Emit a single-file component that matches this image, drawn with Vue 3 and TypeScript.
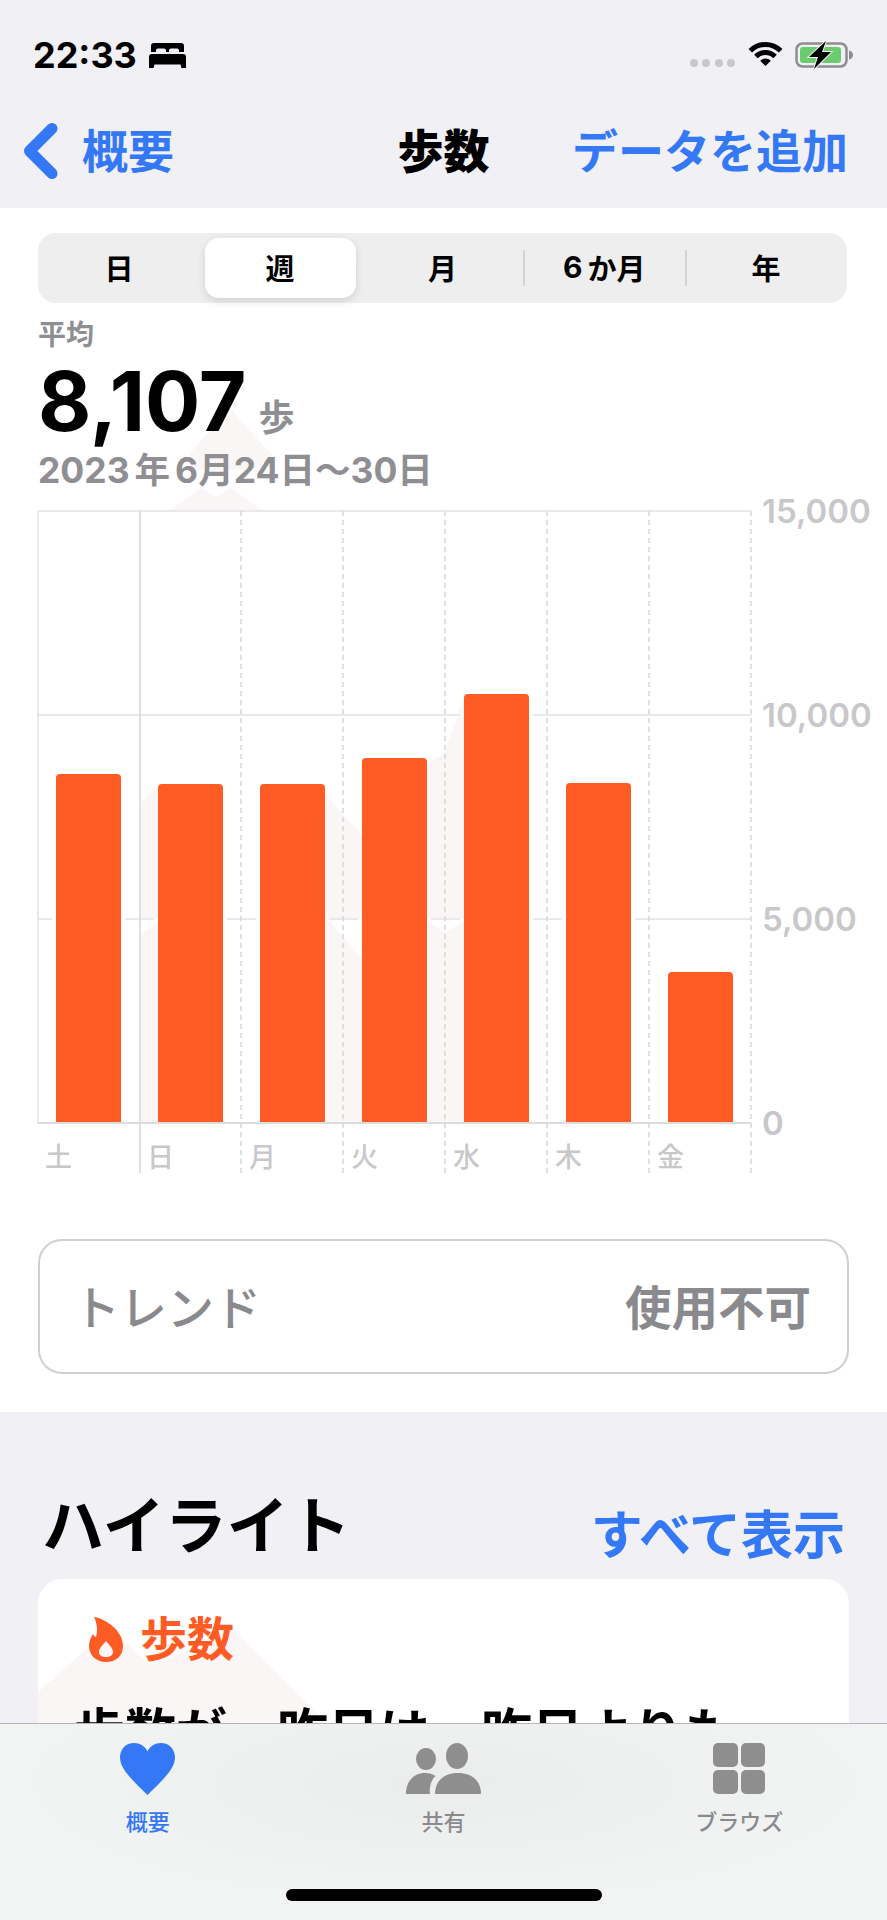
<template>
  <div class="page">
    <header class="top">
      <div class="status">
        <div class="status-left">
          <span class="time">22:33</span>
          <svg class="bed" viewBox="0 0 37 25">
            <path d="M5 0h27a3 3 0 0 1 3 3v6h-5V7.500a2 2 0 0 0-2-2H22a2 2 0 0 0-2 2V9h-3V7.500a2 2 0 0 0-2-2H9a2 2 0 0 0-2 2V9H2V3a3 3 0 0 1 3-3z" />
            <path d="M3 11h31a3 3 0 0 1 3 3v11h-4.500l-1-3.500h-26l-1 3.500H0V14a3 3 0 0 1 3-3z" />
          </svg>
        </div>
        <div class="status-right">
          <div class="dots"><i></i><i></i><i></i><i></i></div>
          <svg class="wifi" viewBox="0 0 35 25">
            <path d="M2.300 8.800A21.500 21.500 0 0 1 32.700 8.800" fill="none" stroke="#000" stroke-width="5" />
            <path d="M7.950 14.450A13.500 13.500 0 0 1 27.050 14.450" fill="none" stroke="#000" stroke-width="5" />
            <path d="M12.200 18.700A7.500 7.500 0 0 1 22.800 18.700L17.500 24z" />
          </svg>
          <svg class="battery" viewBox="0 0 60 28">
            <rect x="1.500" y="2.500" width="50" height="23" rx="6" fill="none" stroke="#8e8e8e" stroke-width="2.500" />
            <rect x="5" y="6" width="41" height="16" rx="3" fill="#6ccb6e" />
            <path d="M54 9.500c2.500.5 4 2.200 4 4.500s-1.500 4-4 4.500z" fill="#8e8e8e" />
            <path d="M31 0L14 16H23L19 28L36 11H27z" stroke="#f0f0f5" stroke-width="2" paint-order="stroke" />
          </svg>
        </div>
      </div>
      <nav class="nav">
        <div class="nav-back">
          <svg class="chevron" viewBox="0 0 35 58">
            <path d="M29 6.500L6.500 29L29 51.500" fill="none" stroke="#3478f6" stroke-width="11" stroke-linecap="round" stroke-linejoin="round" />
          </svg>
          <span>概要</span>
        </div>
        <div class="nav-title">歩数</div>
        <div class="nav-add">データを追加</div>
      </nav>
    </header>

    <main class="main">
      <svg class="watermark" viewBox="0 208 887 320">
        <path d="M230 408L275 458L250 470H190V453z" />
        <path d="M170 510L202 487L216 498L230 487L262 510z" />
      </svg>

      <div class="segments">
        <div
          v-for="(seg, i) in segments"
          :key="seg.label"
          class="segment"
          :class="{ active: i === 1, divided: i === 3 || i === 4 }"
        >
          <span v-if="seg.digit" class="segment-digit">{{ seg.digit }}</span>{{ seg.label }}
        </div>
      </div>

      <div class="stats">
        <div class="stat-label">平均</div>
        <div class="stat-value">8,107<span class="stat-unit">歩</span></div>
        <div class="stat-date">2023<span class="thin">年</span>6月24日〜30日</div>
      </div>

      <svg class="chart" viewBox="0 480 887 700">
        <path v-for="(d, i) in paleShapes" :key="i" :d="d" fill="#faf6f5" />
        <template v-for="line in gridLines" :key="line.y">
          <line
            v-for="seg in line.segments"
            :key="seg[0]"
            :x1="seg[0]"
            :x2="seg[1]"
            :y1="line.y"
            :y2="line.y"
            stroke="#e9e9ea"
            stroke-width="2"
          />
        </template>
        <line x1="38" x2="38" y1="511" y2="1123" stroke="#e2e2e3" stroke-width="1.500" />
        <line x1="140" x2="140" y1="511" y2="1173" stroke="#d6d6d8" stroke-width="1.500" />
        <line
          v-for="x in dashedX"
          :key="x"
          :x1="x"
          :x2="x"
          y1="511"
          y2="1173"
          stroke="#d6d6d8"
          stroke-width="1.500"
          stroke-dasharray="5 4"
        />
        <path v-for="bar in bars" :key="bar.x" :d="bar.d" fill="#fe5c24" />
        <line x1="38" x2="751" y1="1123" y2="1123" stroke="#dcdcdd" stroke-width="2" />
        <text v-for="t in axis" :key="t.label" class="axis" x="762" :y="t.y">{{ t.label }}</text>
        <text v-for="(d, i) in days" :key="d" class="day" :x="45 + i * 102" y="1167">{{ d }}</text>
      </svg>

      <div class="trend">
        <span>トレンド</span>
        <span class="trend-value">使用不可</span>
      </div>
    </main>

    <section class="highlights">
      <div class="highlights-head">
        <h2>ハイライト</h2>
        <span class="show-all">すべて表示</span>
      </div>
      <div class="card">
        <svg class="card-mark" viewBox="38 1579 811 300">
          <path d="M38 1692L110 1628L150 1665L205 1645L213 1673L205 1645L226 1622L330 1726H38z" />
        </svg>
        <div class="card-title">
          <svg class="flame" viewBox="0 0 34 45">
            <path
              fill-rule="evenodd"
              d="M5 0C14 1 34 12 34 29C34 39 27 45 17 45C7 45 0 38 0 29C0 24 2 20 4 17C5 19 6 20 7 20C9 14 8 6 5 0ZM17 24C14 28 10 31 10 35C10 38 13 40 17 40C21 40 24 38 24 35C24 31 20 28 17 24Z"
            />
          </svg>
          <span>歩数</span>
        </div>
        <p class="card-text">歩数が、昨日は、昨日よりも</p>
      </div>
    </section>

    <footer class="tabbar">
      <div class="tab active">
        <svg class="tab-icon" width="55" height="52" viewBox="0 0 55 52">
          <path d="M27.500 52C10 35 0 25 0 14.500C0 6 6 0 14 0C20 0 25 3 27.500 8.500C30 3 35 0 41 0C49 0 55 6 55 14.500C55 25 45 35 27.500 52Z" fill="#3478f6" />
        </svg>
        <span>概要</span>
      </div>
      <div class="tab">
        <svg class="tab-icon" width="75" height="52" viewBox="0 0 75 52">
          <g fill="#8e8e8e">
            <ellipse cx="20" cy="16" rx="10" ry="11" />
            <ellipse cx="51" cy="13" rx="11" ry="13" />
            <path d="M0 51C0 38 8 30 19 30C23 30 27 31 29.500 33C25 37 23 44 24 51H0Z" />
            <path d="M29 51C29 38 38 30 52 30C66 30 75 38 75 51H29Z" />
          </g>
        </svg>
        <span>共有</span>
      </div>
      <div class="tab">
        <svg class="tab-icon" width="52" height="52" viewBox="0 0 52 52">
          <g fill="#8e8e8e">
            <rect x="0" y="0" width="25" height="24" rx="5" />
            <rect x="28" y="0" width="24" height="24" rx="5" />
            <rect x="0" y="27" width="25" height="24" rx="5" />
            <rect x="28" y="27" width="24" height="24" rx="5" />
          </g>
        </svg>
        <span>ブラウズ</span>
      </div>
      <div class="home-indicator"></div>
    </footer>
  </div>
</template>

<script setup lang="ts">
interface Bar {
  x: number;
  top: number;
  d: string;
}

const segments = [
  { label: '日' },
  { label: '週' },
  { label: '月' },
  { digit: '6', label: 'か月' },
  { label: '年' },
];
const days = ['土', '日', '月', '火', '水', '木', '金'];
const steps = [8554, 8309, 8309, 8946, 10515, 8333, 3690];

const baseY = 1123;
const pxPerStep = 612 / 15000;
const barWidth = 65;

const bars: Bar[] = steps.map((value, i) => {
  const x = 56 + i * 102;
  const top = Math.round(baseY - value * pxPerStep);
  const d = `M${x} ${baseY}V${top + 4}a4 4 0 0 1 4-4H${x + barWidth - 4}a4 4 0 0 1 4 4V${baseY}z`;
  return { x, top, d };
});

// grid lines stop a few pixels short of any bar that crosses them
const gridLines = [511, 715, 919].map((y) => {
  const result: number[][] = [];
  let start = 38;
  bars
    .filter((b) => b.top < y)
    .forEach((b) => {
      result.push([start, b.x - 4]);
      start = b.x + barWidth + 4;
    });
  result.push([start, 751]);
  return { y, segments: result };
});

const dashedX = [241, 343, 445, 547, 649, 751];

const axis = [
  { label: '15,000', y: 523 },
  { label: '10,000', y: 727 },
  { label: '5,000', y: 931 },
  { label: '0', y: 1135 },
];

// faint watermark showing through the gaps between bars
const paleShapes = [
  'M140 803L158 788V919H140z',
  'M140 935L158 923V1123H140z',
  'M325 795L362 835V919H325z',
  'M326 918L362 958V1123H326z',
  'M427 765L445 752L464 697V919H427z',
  'M428 921L445 933L464 921V1123H428z',
];
</script>

<style scoped>
.page {
  position: relative;
  width: 887px;
  height: 1920px;
  overflow: hidden;
  background: #f0f0f5;
  font-family: Inter, "Noto Sans CJK JP", sans-serif;
  color: #000;
}

.top {
  height: 208px;
  padding-top: 41px;
  box-sizing: border-box;
  background: #f0f0f5;
}

.status {
  display: flex;
  justify-content: space-between;
  height: 28px;
}

.status-left {
  display: flex;
  align-items: center;
  gap: 12px;
  padding-left: 33px;
}

.time {
  font-size: 36px;
  font-weight: 700;
  line-height: 28px;
}

.bed {
  width: 37px;
  height: 25px;
}

.status-right {
  display: flex;
  align-items: flex-start;
  padding-right: 32px;
}

.dots {
  display: flex;
  gap: 4.500px;
  margin-top: 18px;
  margin-right: 13px;
}

.dots i {
  width: 8px;
  height: 8px;
  border-radius: 50%;
  background: #c8c8ca;
}

.wifi {
  width: 35px;
  height: 25px;
  margin-top: 1px;
  margin-right: 12px;
}

.battery {
  width: 60px;
  height: 28px;
}

.nav {
  display: grid;
  grid-template-columns: 1fr auto 1fr;
  align-items: center;
  height: 92px;
  margin-top: 36px;
  font-size: 46px;
  line-height: 60px;
  color: #3478f6;
  font-weight: 600;
}

.nav-back {
  display: flex;
  align-items: center;
  gap: 24px;
  padding-left: 23px;
}

.chevron {
  width: 35px;
  height: 58px;
}

.nav-title {
  color: #000;
  font-weight: 900;
}

.nav-add {
  text-align: right;
  padding-right: 39px;
}

.main {
  position: relative;
  height: 1204px;
  box-sizing: border-box;
  padding: 25px 38px 38px;
  background: #fff;
}

.main > * {
  position: relative;
}

.main > .watermark {
  position: absolute;
  top: 0;
  left: 0;
  width: 887px;
  height: 320px;
  fill: #faf6f5;
}

.segments {
  display: flex;
  width: 809px;
  height: 70px;
  border-radius: 18px;
  background: #eeeeef;
}

.segment {
  position: relative;
  flex: 0 0 161.800px;
  display: flex;
  align-items: center;
  justify-content: center;
  padding-bottom: 3px;
  box-sizing: border-box;
  font-size: 29px;
  font-weight: 600;
}

.segment.active {
  flex: 0 0 151px;
  margin: 5px 6px 5px 4.800px;
  padding-bottom: 3px;
  border-radius: 14px;
  background: #fff;
  box-shadow: 0 3px 8px rgba(0, 0, 0, 0.12);
}

.segment.divided::before {
  content: "";
  position: absolute;
  left: 0;
  top: 17px;
  bottom: 17px;
  width: 2px;
  background: #d4d4d6;
}

.segment-digit {
  margin-right: 5px;
  font-size: 30px;
  font-weight: 700;
}

.stat-label {
  margin-top: 14px;
  font-size: 28px;
  line-height: 36px;
  font-weight: 700;
  color: #8e8e93;
}

.stat-value {
  display: flex;
  align-items: baseline;
  margin-top: 4px;
  font-size: 82px;
  line-height: 90px;
  font-weight: 700;
}

.stat-unit {
  margin-left: 12px;
  font-size: 36px;
  line-height: 36px;
  color: #8e8e93;
}

.stat-date {
  height: 40px;
  margin-top: 4px;
  font-size: 35.500px;
  line-height: 40px;
  font-weight: 700;
  color: #8e8e93;
}

.thin {
  margin: 0 5px;
}

.chart {
  display: block;
  width: 887px;
  height: 700px;
  margin: -11px 0 0 -38px;
}

.axis {
  font-size: 33px;
  font-weight: 600;
  fill: #c8c8ca;
}

.day {
  font-size: 27px;
  font-weight: 500;
  fill: #c8c8ca;
}

.trend {
  display: flex;
  align-items: center;
  justify-content: space-between;
  box-sizing: border-box;
  width: 811px;
  height: 135px;
  margin-top: 59px;
  padding: 0 36px 5px 33px;
  border: 2.500px solid #cfcfd4;
  border-radius: 24px;
  font-size: 47px;
  font-weight: 500;
  color: #8a8a8e;
}

.trend-value {
  font-size: 46.500px;
  font-weight: 700;
}

.highlights {
  padding: 75px 38px 0;
}

.highlights-head {
  display: flex;
  align-items: center;
  justify-content: space-between;
  height: 80px;
  padding: 0 4px 0 4px;
}

.highlights-head h2 {
  margin: 0;
  font-size: 62px;
  font-weight: 700;
  line-height: 80px;
}

.show-all {
  margin-top: 8px;
  font-size: 52px;
  font-weight: 600;
  color: #3478f6;
}

.card {
  position: relative;
  height: 300px;
  margin-top: 12px;
  box-sizing: border-box;
  padding: 35px 36px 0;
  overflow: hidden;
  border-radius: 24px;
  background: #fff;
}

.card > * {
  position: relative;
}

.card > .card-mark {
  position: absolute;
  top: 0;
  left: 0;
  width: 811px;
  height: 300px;
  fill: #faf6f5;
}

.card-title {
  display: flex;
  align-items: center;
  gap: 17px;
  margin-left: 15px;
  height: 50px;
  font-size: 47px;
  font-weight: 700;
  line-height: 50px;
  color: #fe5c24;
}

.flame {
  width: 34px;
  height: 45px;
  fill: #fe5c24;
}

.card-text {
  margin: 39px 0 0;
  font-size: 51px;
  font-weight: 700;
  line-height: 60px;
  white-space: nowrap;
}

.tabbar {
  position: absolute;
  left: 0;
  right: 0;
  bottom: 0;
  display: grid;
  grid-template-columns: repeat(3, 1fr);
  align-content: start;
  box-sizing: border-box;
  height: 197px;
  padding-top: 19px;
  border-top: 1px solid #b5b5b8;
  background:
    radial-gradient(ellipse 420px 120px at 50% 30%, #ebecec, rgba(235, 236, 236, 0)),
    #f2f3f3;
}

.tab {
  display: flex;
  flex-direction: column;
  align-items: center;
  font-size: 22px;
  font-weight: 500;
  line-height: 28px;
  color: #8a8a8e;
}

.tab.active {
  color: #3478f6;
}

.tab-icon {
  display: block;
  margin-bottom: 13px;
}

.home-indicator {
  position: absolute;
  left: 286px;
  bottom: 19px;
  width: 316px;
  height: 12px;
  border-radius: 6px;
  background: #000;
}
</style>
